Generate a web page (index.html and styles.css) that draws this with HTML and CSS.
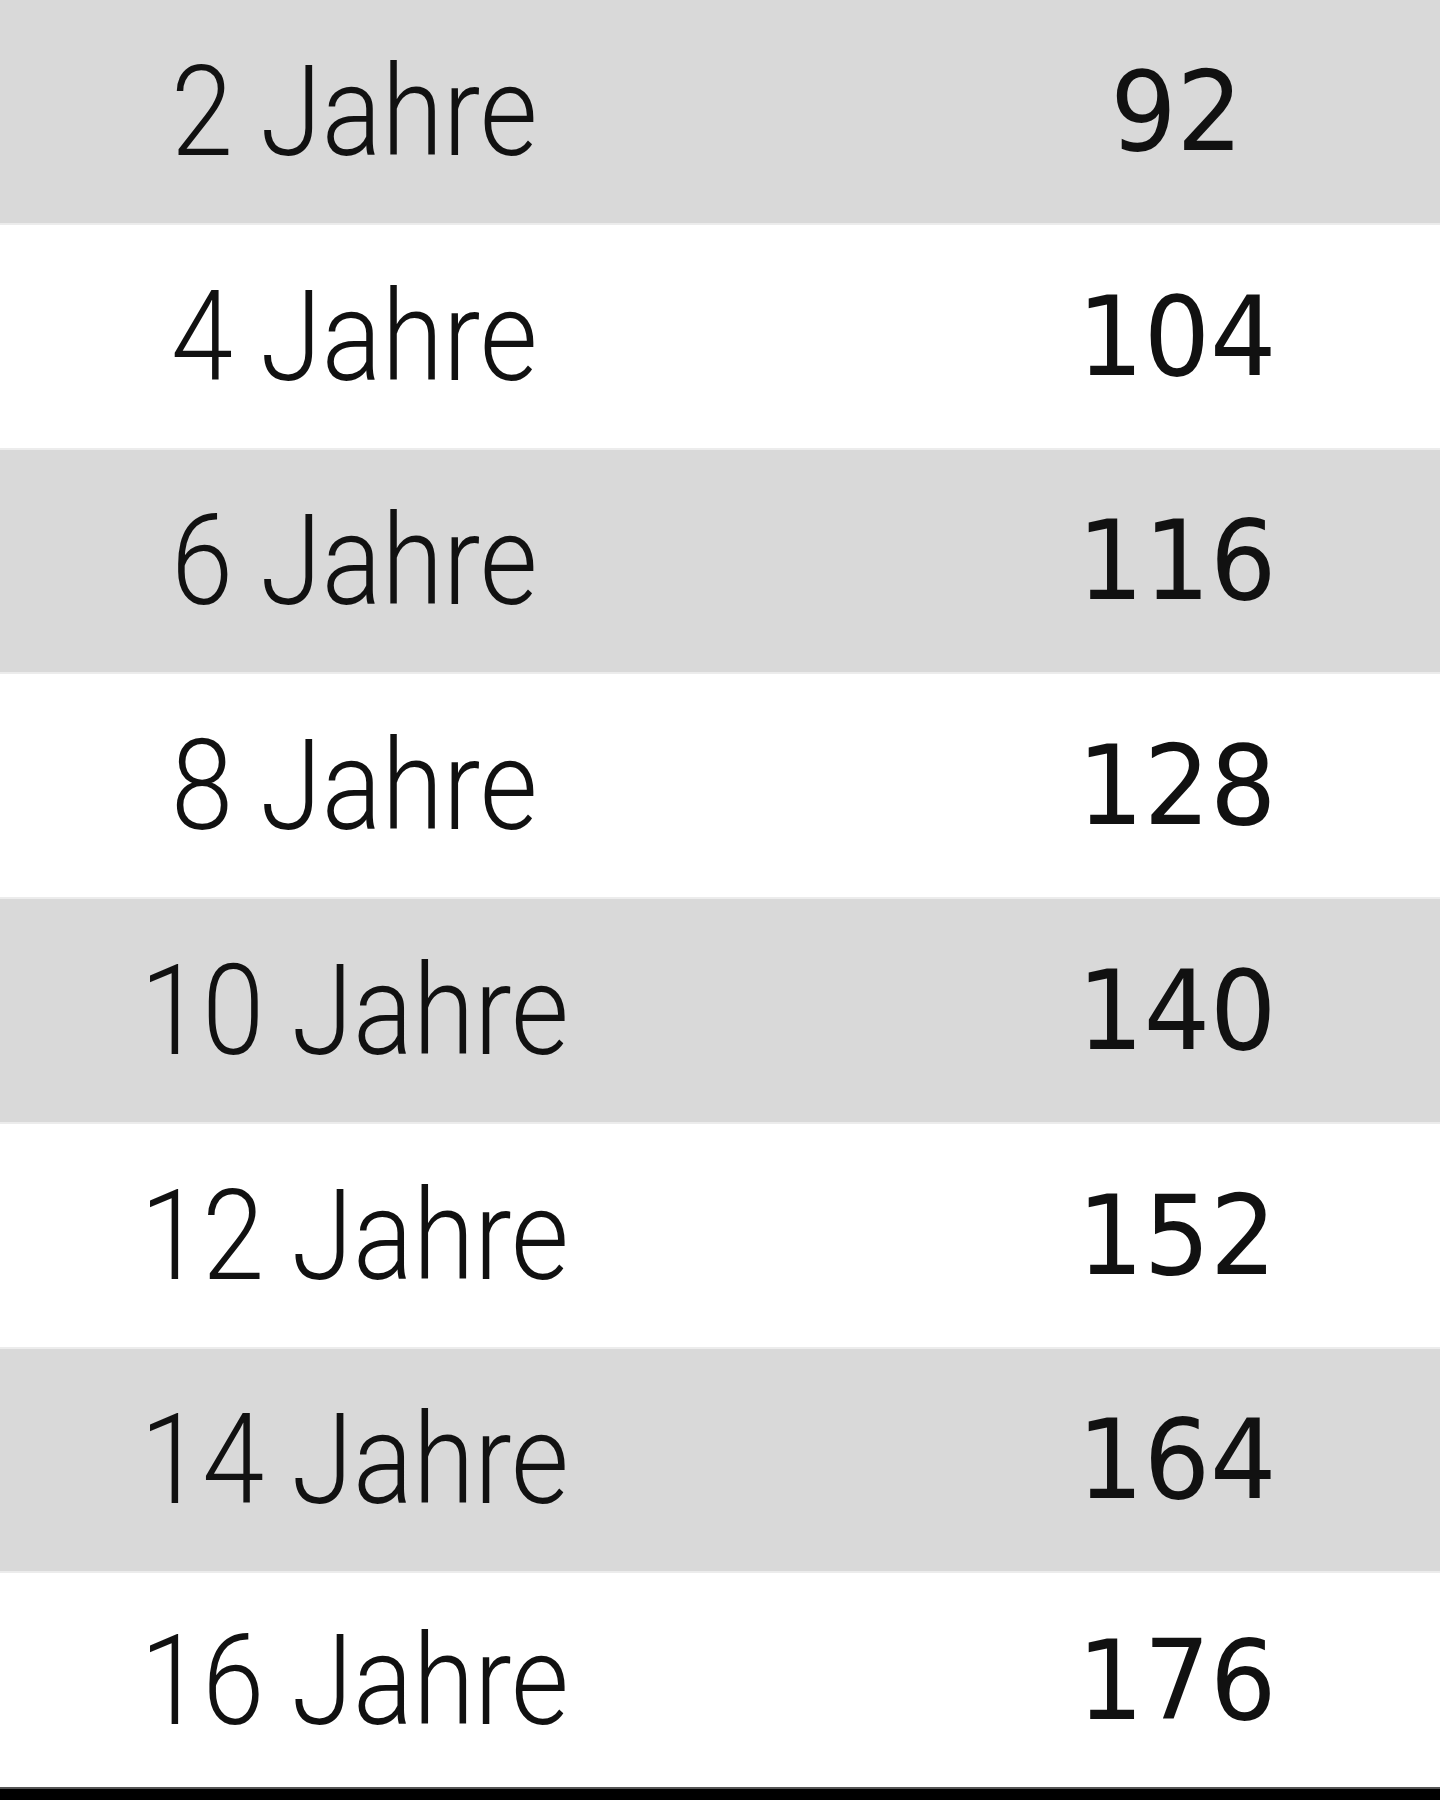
FILE: index.html
```html
<!DOCTYPE html>
<html lang="de">
<head>
<meta charset="utf-8">
<title>Jahre</title>
<link rel="stylesheet" href="styles.css">
</head>
<body>
<div class="table">
  <div class="row grey"><div class="age"><span>2 Jahre</span></div><div class="val"><span>92</span></div></div>
  <div class="row"><div class="age"><span>4 Jahre</span></div><div class="val"><span>104</span></div></div>
  <div class="row grey"><div class="age"><span>6 Jahre</span></div><div class="val"><span>116</span></div></div>
  <div class="row"><div class="age"><span>8 Jahre</span></div><div class="val"><span>128</span></div></div>
  <div class="row grey"><div class="age"><span>10 Jahre</span></div><div class="val"><span>140</span></div></div>
  <div class="row"><div class="age"><span>12 Jahre</span></div><div class="val"><span>152</span></div></div>
  <div class="row grey"><div class="age"><span>14 Jahre</span></div><div class="val"><span>164</span></div></div>
  <div class="row last"><div class="age"><span>16 Jahre</span></div><div class="val"><span>176</span></div></div>
  <div class="bottom-bar"></div>
</div>
</body>
</html>
```
FILE: styles.css
```css
html, body {
  margin: 0;
  padding: 0;
  background: #ffffff;
}

.table {
  width: 1440px;
  height: 1800px;
  overflow: hidden;
  display: flex;
  flex-direction: column;
  background: #ffffff;
}

.row {
  height: 222.75px;
  flex: none;
  display: grid;
  grid-template-columns: 708px 1fr;
  border-bottom: 2px solid #ececec;
  background: #ffffff;
  color: #111111;
}

.row.grey {
  background: #d9d9d9;
}

.row.last {
  height: 214px;
  border-bottom: 2px solid #555555;
}

.age,
.val {
  display: flex;
  align-items: center;
  justify-content: center;
  line-height: 1;
}

.age {
  font-family: Roboto, "Liberation Sans", sans-serif;
  font-weight: 300;
  font-size: 127px;
}

.age span {
  display: inline-block;
  transform: scaleX(0.88);
  transform-origin: center;
  white-space: nowrap;
}

.val {
  padding-left: 206px;
  font-family: "DejaVu Sans", Verdana, sans-serif;
  font-size: 111px;
  font-weight: 400;
}

.val span {
  display: inline-block;
  transform: scaleX(0.94);
  transform-origin: center;
  white-space: nowrap;
}

.bottom-bar {
  flex: 1;
  background: #000000;
}
```
